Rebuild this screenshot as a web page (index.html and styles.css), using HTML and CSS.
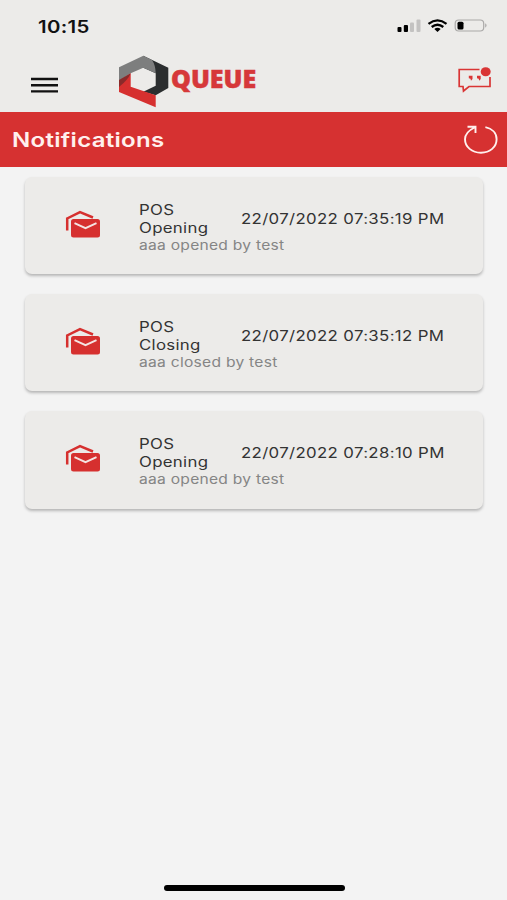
FILE: index.html
```html
<!DOCTYPE html>
<html lang="en">
<head>
<meta charset="utf-8">
<title>Notifications</title>
<link rel="stylesheet" href="styles.css">
</head>
<body>
<div class="screen">
  <header class="header">
    <div class="status">
      <span class="wide clock">10:15</span>
      <svg class="status-icons" width="92" height="16" viewBox="0 0 92 16">
        <rect x="0.500" y="9" width="4" height="5" rx="1"/>
        <rect x="6.800" y="7" width="4.200" height="7" rx="1"/>
        <rect x="13" y="4.500" width="4" height="9.500" rx="1" fill="#c3c2c1"/>
        <rect x="19.500" y="1.500" width="4" height="12.500" rx="1" fill="#c3c2c1"/>
        <g fill="none" stroke="#000" stroke-width="2.300">
          <path d="M31.500 5.800Q40.500-1 49.500 5.800"/>
          <path d="M34.700 9Q40.500 4.400 46.300 9"/>
        </g>
        <path d="M37.300 11Q40.500 8.300 43.700 11L40.500 14z"/>
        <rect x="58.200" y="2" width="28.500" height="11" rx="3.500" fill="none" stroke="#aaa9a8" stroke-width="1.200"/>
        <rect x="60.500" y="3.800" width="6" height="7.600" rx="1.500"/>
        <path d="M88.200 5.300Q91 7.500 88.200 9.700z" fill="#aaa9a8"/>
      </svg>
    </div>
    <div class="toolbar">
      <svg class="menu" width="27" height="17" viewBox="0 0 27 17"><path d="M0 2H27M0 8.200H27M0 14.400H27" stroke="#111" stroke-width="2.400"/></svg>
      <div class="brand">
        <svg width="52" height="54" viewBox="0 0 52 54">
          <path d="M25.300 1.700 50.300 13.700V34L37.700 41.300 25.300 37.700 37.700 31.700V19.300L25.300 13.700z" fill="#2b2e2f"/>
          <path d="M1 13.300 25.300 1.700 34 6Q37.500 11 37.700 19.300L25.300 13.700 12.700 19.300 1 27z" fill="#7d7e7e"/>
          <path d="M1 27 12.700 19.300V32.700L37.700 41.300V53.300L1 38z" fill="#d6302f"/>
          <path d="M1 26 12.700 19.300Q10 26 1 33z" fill="#892a2a"/>
        </svg>
        <span class="wide brand-name">QUEUE</span>
      </div>
      <svg class="chat" width="35" height="28" viewBox="0 0 35 28">
        <path d="M22.500 3.500H2.200V20.500H6L6.500 25 12 20.500H33V11" fill="none" stroke="#d93535" stroke-width="1.700"/>
        <ellipse cx="28.700" cy="5.700" rx="5" ry="4.500" fill="#d93535"/>
        <path d="M11.800 9.700H15.500V13L14 14.800 13.500 12.800 11.800 12.300zM20 9.700H23.700V13L22.200 14.800 21.700 12.800 20 12.300z" fill="#d93535"/>
      </svg>
    </div>
  </header>
  <div class="titlebar">
    <h1 class="wide title">Notifications</h1>
    <svg class="refresh" width="36" height="32" viewBox="0 0 36 32"><path d="M22.400 3.100C29 4.500 33.600 9 33.600 15.200 33.600 23 27 28.700 18 28.700S2 23 2 15.200C2 11 4.500 7 11.500 3.500M4.500 2.700H12.500V9" fill="none" stroke="#fff0ee" stroke-width="1.900"/></svg>
  </div>
  <main class="list">
    <article class="card">
      <svg class="mail" width="36" height="28" viewBox="0 0 36 28"><path d="M2.200 20.500V8.500L15 2.200 28 7.500" fill="none" stroke="#d6302f" stroke-width="2.500"/><rect x="6" y="9" width="29" height="18.500" rx="2.500" fill="#d6302f"/><path d="M9.500 13.200 20.500 18.200 31.500 13.200" fill="none" stroke="#f4e4e2" stroke-width="2"/></svg>
      <div class="content">
        <div class="row"><h2 class="wide name">POS<br>Opening</h2><time class="wide date">22/07/2022 07:35:19 PM</time></div>
        <p class="wide message">aaa opened by test</p>
      </div>
    </article>
    <article class="card">
      <svg class="mail" width="36" height="28" viewBox="0 0 36 28"><path d="M2.200 20.500V8.500L15 2.200 28 7.500" fill="none" stroke="#d6302f" stroke-width="2.500"/><rect x="6" y="9" width="29" height="18.500" rx="2.500" fill="#d6302f"/><path d="M9.500 13.200 20.500 18.200 31.500 13.200" fill="none" stroke="#f4e4e2" stroke-width="2"/></svg>
      <div class="content">
        <div class="row"><h2 class="wide name">POS<br>Closing</h2><time class="wide date">22/07/2022 07:35:12 PM</time></div>
        <p class="wide message">aaa closed by test</p>
      </div>
    </article>
    <article class="card">
      <svg class="mail" width="36" height="28" viewBox="0 0 36 28"><path d="M2.200 20.500V8.500L15 2.200 28 7.500" fill="none" stroke="#d6302f" stroke-width="2.500"/><rect x="6" y="9" width="29" height="18.500" rx="2.500" fill="#d6302f"/><path d="M9.500 13.200 20.500 18.200 31.500 13.200" fill="none" stroke="#f4e4e2" stroke-width="2"/></svg>
      <div class="content">
        <div class="row"><h2 class="wide name">POS<br>Opening</h2><time class="wide date">22/07/2022 07:28:10 PM</time></div>
        <p class="wide message">aaa opened by test</p>
      </div>
    </article>
  </main>
  <div class="home"></div>
</div>
</body>
</html>
```
FILE: styles.css
```css
* { box-sizing: border-box; }
body { margin: 0; font-family: Inter, "Liberation Sans", sans-serif; background: #f3f3f3; }
h1, h2, p { margin: 0; }
svg { display: block; flex: none; }
.screen { height: 900px; display: flex; flex-direction: column; }
/* Expanded lettering, stretched from the left edge */
.wide { display: block; white-space: nowrap; transform: scaleX(1.2); transform-origin: left center; }
.header { height: 112px; background: #ecebe9; }
.status { height: 52px; padding: 0 18px 0 38px; display: flex; align-items: center; justify-content: space-between; }
.clock { font-size: 17px; font-weight: 600; color: #111; letter-spacing: .25px; padding-top: 1px; }
.toolbar { height: 60px; padding: 0 15px 0 31px; display: flex; align-items: flex-start; }
.menu { margin-top: 25px; }
.brand { display: flex; margin: 2px auto 0 60px; }
.brand-name { font: 800 25px/30px "Open Sans", sans-serif; color: #d6383a; -webkit-text-stroke: .5px #d6383a; margin: 9px 0 0 1px; transform: scaleX(1); }
.chat { margin-top: 14px; }
.titlebar { height: 55px; background: #d63131; padding: 0 8px 0 12px; display: flex; align-items: center; justify-content: space-between; }
.title { font-size: 20px; font-weight: 600; color: #fff0ee; letter-spacing: .25px; }
.list { flex: 1; padding: 10px 24px 0 25px; display: flex; flex-direction: column; gap: 20px; }
.card { height: 97.200px; background: #ecebe9; border-radius: 7px; box-shadow: 0 2px 3px rgba(0,0,0,.25); display: flex; padding: 24px 39px 0 40px; }
.mail { margin-top: 9px; }
.content { flex: 1; margin-left: 38px; }
.row { display: flex; align-items: center; height: 35px; }
.name { width: 102px; font-size: 14px; line-height: 17.500px; font-weight: 400; color: #333; letter-spacing: .25px; }
.date { font-size: 14px; line-height: 18px; color: #333; letter-spacing: .29px; }
.message { font-size: 13px; line-height: 18px; color: #858585; letter-spacing: .22px; }
.home { width: 181px; height: 6px; border-radius: 3px; background: #000; margin: 0 auto 9px 164px; }
```
